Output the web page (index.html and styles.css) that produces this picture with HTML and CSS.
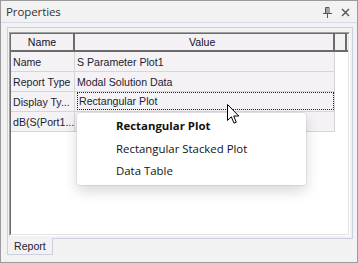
FILE: index.html
```html
<!DOCTYPE html>
<html>
<head>
<meta charset="utf-8">
<link rel="stylesheet" href="styles.css">
</head>
<body>
<div class="window">
  <div class="titlebar">
    <span class="title">Properties</span>
    <span class="tools">
      <svg class="pin" width="9" height="11" viewBox="0 0 9 11"><path d="M2.5 0.5h3.5v6h-3.5z M4 1v5.5" fill="none" stroke="#555" stroke-width="1"/><path d="M0 6.5h9" stroke="#555" stroke-width="1"/><path d="M4.5 7v4" stroke="#555" stroke-width="1"/></svg>
      <svg class="close" width="9" height="9" viewBox="0 0 9 9"><path d="M1 1l7 7M8 1l-7 7" stroke="#555" stroke-width="1.4"/></svg>
    </span>
  </div>
  <div class="content">
    <div class="tabpage">
      <div class="grid">
        <div class="grid-inner">
          <div class="hrow">
            <div class="hcell c-name">Name</div>
            <div class="hcell c-value">Value</div>
            <div class="hcell c-extra"></div>
          </div>
          <div class="row">
            <div class="cell c-name">Name</div>
            <div class="cell c-value">S Parameter Plot1</div>
          </div>
          <div class="row">
            <div class="cell c-name">Report Type</div>
            <div class="cell c-value">Modal Solution Data</div>
          </div>
          <div class="row">
            <div class="cell c-name">Display Ty...</div>
            <div class="cell c-value"><span class="focus">Rectangular Plot</span></div>
          </div>
          <div class="row">
            <div class="cell c-name">dB(S(Port1...</div>
            <div class="cell c-value"></div>
          </div>
        </div>
      </div>
    </div>
    <div class="tabstrip">
      <div class="tab">Report</div>
    </div>
  </div>
  <div class="menu">
    <div class="item bold">Rectangular Plot</div>
    <div class="item">Rectangular Stacked Plot</div>
    <div class="item">Data Table</div>
  </div>
  <svg class="cursor" width="14" height="21" viewBox="0 0 14 21"><path d="M0.5 0.5 L0.5 16.5 L4.3 12.8 L7 19.2 L9.3 18.2 L6.7 12 L11.8 12 Z" fill="#fff" stroke="#000" stroke-width="1" stroke-linejoin="miter"/></svg>
</div>
</body>
</html>
```

FILE: styles.css
```css
* { box-sizing: border-box; }
html, body { margin: 0; padding: 0; background: #f3f3f3; }
.window {
  position: relative;
  width: 358px;
  height: 263px;
  border: 1px solid #9b9b9b;
  background: #f3f2f3;
  display: flex;
  flex-direction: column;
  overflow: hidden;
}
.titlebar {
  height: 22px;
  border-bottom: 1px solid #d9d8e6;
  display: flex;
  align-items: center;
  justify-content: space-between;
  padding: 0 7px 0 5px;
  flex: none;
}
.title {
  font-family: "Open Sans", "Noto Sans", sans-serif;
  font-size: 11.5px;
  color: #333;
  letter-spacing: -0.1px;
}
.tools { display: flex; align-items: center; gap: 9px; padding-top: 1px; }
.pin { display: block; }
.close { display: block; }
.content {
  flex: 1;
  padding: 4px 4px 0 6px;
  display: flex;
  flex-direction: column;
}
.tabpage {
  height: 212px;
  border: 1px solid #cfcde2;
  padding: 4px 2px 2px 1px;
  flex: none;
}
.grid {
  height: 100%;
  border-top: 1px solid #a0a0a0;
  border-left: 1px solid #a0a0a0;
  border-right: 1px solid #ffffff;
  border-bottom: 1px solid #ffffff;
  background: #fff;
}
.grid-inner {
  height: 100%;
  border-top: 1px solid #6b6b6b;
  border-left: 1px solid #6b6b6b;
  border-right: 1px solid #e3e3e3;
  border-bottom: 1px solid #e3e3e3;
  background: #fff;
  font-family: "Liberation Sans", Arial, sans-serif;
  font-size: 10.6px;
  color: #1c1c30;
}
.hrow {
  display: flex;
  height: 18px;
  border-bottom: 2px solid #6b6b6b;
  background: #f3f1f3;
}
.hcell {
  border-right: 2px solid #6b6b6b;
  display: flex;
  align-items: center;
  justify-content: center;
  color: #10102a;
}
.hrow .c-name { width: 64px; }
.hrow .c-value { width: 260px; justify-content: flex-start; padding-left: 114px; }
.hrow .c-extra { width: 12px; }
.row {
  display: flex;
  height: 20px;
}
.cell {
  height: 20px;
  border-bottom: 1px solid #d6d6d6;
  border-right: 1px solid #d6d6d6;
  background: #f4f2f4;
  display: flex;
  align-items: center;
  white-space: nowrap;
  overflow: hidden;
}
.row .c-name {
  width: 64px;
  padding-left: 2px;
  padding-top: 1px;
}
.row .c-value {
  width: 260px;
  padding-left: 2px;
}
.focus {
  display: block;
  width: 257px;
  height: 18px;
  margin-top: -1px;
  border: 1px dotted #222;
  padding-left: 1px;
  line-height: 16px;
}
.tabstrip {
  display: flex;
  flex: none;
}
.tab {
  width: 46px;
  height: 17px;
  margin-top: -1px;
  border: 1px solid #cfcde2;
  border-top: none;
  background: #f3f2f3;
  font-family: "Liberation Sans", Arial, sans-serif;
  font-size: 10.6px;
  color: #1c1c30;
  padding: 2px 0 0 6px;
}
.menu {
  position: absolute;
  left: 76px;
  top: 112px;
  width: 229px;
  height: 72px;
  background: #fff;
  border-radius: 3px;
  box-shadow: 0 0 0 1px rgba(0,0,0,0.06), 0 6px 14px rgba(0,0,0,0.16);
  padding-top: 2px;
  font-family: "Open Sans", "Noto Sans", sans-serif;
  font-size: 11.4px;
  color: #111;
}
.item {
  height: 22.5px;
  line-height: 22px;
  padding-left: 39px;
}
.item.bold { font-weight: 700; }
.cursor {
  position: absolute;
  left: 226px;
  top: 103px;
}
```
